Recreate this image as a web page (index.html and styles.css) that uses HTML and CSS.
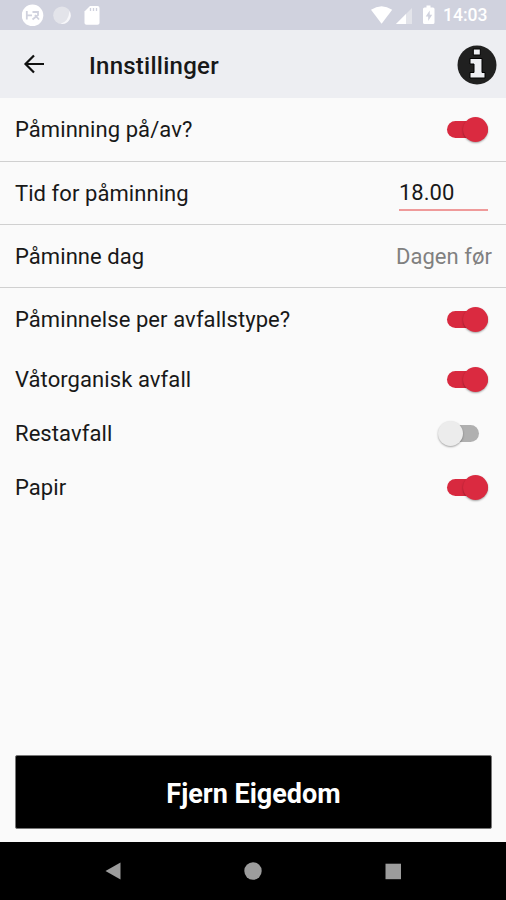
FILE: index.html
```html
<!DOCTYPE html>
<html lang="nn">
  <head>
    <meta charset="utf-8" />
    <meta name="viewport" content="width=device-width, initial-scale=1.0" />
    <title>Innstillinger</title>
    <link rel="stylesheet" href="styles.css">
  </head>
  <body>
    <div class="status-bar">
      <svg class="notifications" width="80" height="30" viewBox="0 0 80 30">
        <circle cx="10.5" cy="15.3" r="10.8" fill="#fff" />
        <path d="M4.800 11v8.500M5 15.300h5M10.500 12h5.500v3l-5.500 4.500M13 15l4 4.500" fill="none" stroke="#d0d2de" stroke-width="1.8" />
        <circle cx="40" cy="15.3" r="8.8" fill="#e3e4ea" />
        <path d="M47.500 11a8.700 8.700 0 0 1-9 12.800q8-2 9-12.800z" fill="#f7f7fa" />
        <path d="M68 6h7.500q2 0 2 2v15q0 1.700-2 1.700h-11q-2 0-2-1.700V11.500z" fill="#fff" />
        <path d="M68.500 8v3M71.500 8v3M74.500 8v3" stroke="#d0d2de" stroke-width="1.300" />
      </svg>
      <svg class="signals" width="64" height="30" viewBox="0 0 64 30">
        <path d="M0 9.800Q10.500 2.800 21.200 9.800L10.600 23.800z" fill="#fff" />
        <path d="M41 8v16H25z" fill="#e3e4ea" />
        <path d="M35 14v10H25z" fill="#fff" />
        <path d="M55.500 5.500h4v2h2.500q1.500 0 1.500 1.500v13.500q0 1.500-1.500 1.500h-8.500q-1.500 0-1.500-1.500V9q0-1.500 1.500-1.500h2z" fill="#fff" />
        <path d="M58.700 10.500l-4 6h2.500v4.500l4-6.200h-2.500z" fill="#d0d2de" />
      </svg>
      <span class="clock">14:03</span>
    </div>

    <div class="app-bar">
      <svg class="back" width="22" height="22" viewBox="0 0 22 22">
        <path d="M21 11H3M11 2.500L2.500 11l8.500 8.500" fill="none" stroke="#111" stroke-width="2.200" />
      </svg>
      <h1>Innstillinger</h1>
      <svg class="info" width="40" height="40" viewBox="0 0 40 40">
        <circle cx="20" cy="20" r="19.500" fill="#202020" />
        <path d="M16.300 4h7v6h-7zM13 13.500h12v14h3v5.500H13v-5.500h4V19H13z" fill="#eeeff3" stroke="#000" stroke-width="1" />
      </svg>
    </div>

    <div class="settings">
      <div class="row">
        <span class="label">Påminning på/av?</span>
        <span class="switch on"></span>
      </div>
      <div class="row">
        <span class="label">Tid for påminning</span>
        <span class="time">18.00</span>
      </div>
      <div class="row">
        <span class="label">Påminne dag</span>
        <span class="day">Dagen før</span>
      </div>
      <div class="row last">
        <span class="label">Påminnelse per avfallstype?</span>
        <span class="switch on"></span>
      </div>
      <div class="row type">
        <span class="label">Våtorganisk avfall</span>
        <span class="switch on"></span>
      </div>
      <div class="row type">
        <span class="label">Restavfall</span>
        <span class="switch off"></span>
      </div>
      <div class="row type">
        <span class="label">Papir</span>
        <span class="switch on"></span>
      </div>
    </div>

    <button class="remove" type="button">Fjern Eigedom</button>

    <div class="nav-bar">
      <svg width="20" height="20" viewBox="0 0 20 20"><path d="M2.500 10L17.500 1.500v17z" /></svg>
      <svg width="20" height="20" viewBox="0 0 20 20"><circle cx="10" cy="10" r="8.700" /></svg>
      <svg width="20" height="20" viewBox="0 0 20 20"><path d="M2.500 2.700h15.500v15.500H2.500z" /></svg>
    </div>
  </body>
</html>
```
FILE: styles.css
```css
* {
  box-sizing: border-box;
}

body {
  display: flex;
  flex-direction: column;
  height: 900px;
  margin: 0;
  background: #fafafa;
  color: #181818;
  font-family: Roboto, sans-serif;
  font-size: 22px;
}

/* Android status bar */
.status-bar {
  display: flex;
  align-items: center;
  height: 30px;
  padding: 0 18px 0 22px;
  background: #d0d2de;
}

.signals {
  margin-left: auto;
}

.clock {
  width: 45px;
  margin-left: 8px;
  padding-top: 1px;
  color: #fff;
  font-size: 17.5px;
  font-weight: 500;
  line-height: 29px;
  white-space: nowrap;
}

.app-bar {
  display: flex;
  align-items: center;
  height: 68px;
  padding: 0 9px 0 23px;
  background: #edeef2;
}

h1 {
  margin: 3px 0 0 44px;
  font-size: 24px;
  font-weight: 500;
  letter-spacing: 0.25px;
}

.info {
  margin-top: 1px;
  margin-left: auto;
}

/* Setting rows */
.settings {
  flex: 1;
}

.row {
  display: flex;
  align-items: center;
  justify-content: space-between;
  height: 63px;
  padding: 0 14px 0 15px;
  border-bottom: 1px solid #d0d0d0;
}

.row:first-child {
  height: 64px;
}

.row.last {
  margin-bottom: 1px;
  border-bottom: none;
}

.row.type {
  height: 54px;
  border-bottom: none;
}

.label {
  letter-spacing: 0.07px;
}

.time {
  width: 89px;
  height: 36px;
  margin-right: 4px;
  border-bottom: 2px solid #ef9a9a;
  line-height: 36px;
}

.day {
  color: #808080;
  letter-spacing: 0.05px;
}

/* Switches */
.switch {
  display: flex;
  align-items: center;
  width: 41px;
  height: 17px;
  border-radius: 9px;
}

.switch::before {
  content: "";
  width: 25px;
  height: 25px;
  border-radius: 50%;
  box-shadow: 0 1px 2px rgba(0, 0, 0, 0.35);
}

.switch.on {
  justify-content: flex-end;
  margin-right: 4px;
  background: #d8293f;
}

.switch.on::before {
  background: #da2a40;
}

.switch.off {
  margin-right: 13px;
  background: linear-gradient(to right, transparent 12px, #b0b0b0 12px);
}

.switch.off::before {
  background: #ececec;
}

.remove {
  height: 74px;
  margin: 0 14px 13px 15px;
  padding-top: 4px;
  border: 1px solid #777;
  border-radius: 2px;
  background: #000;
  color: #fff;
  font-family: inherit;
  font-size: 27px;
  font-weight: 700;
}

/* Android navigation buttons */
.nav-bar {
  display: flex;
  justify-content: center;
  gap: 120px;
  height: 58px;
  padding-top: 19px;
  background: #000;
}

.nav-bar svg {
  fill: #9c9c9c;
}
```
